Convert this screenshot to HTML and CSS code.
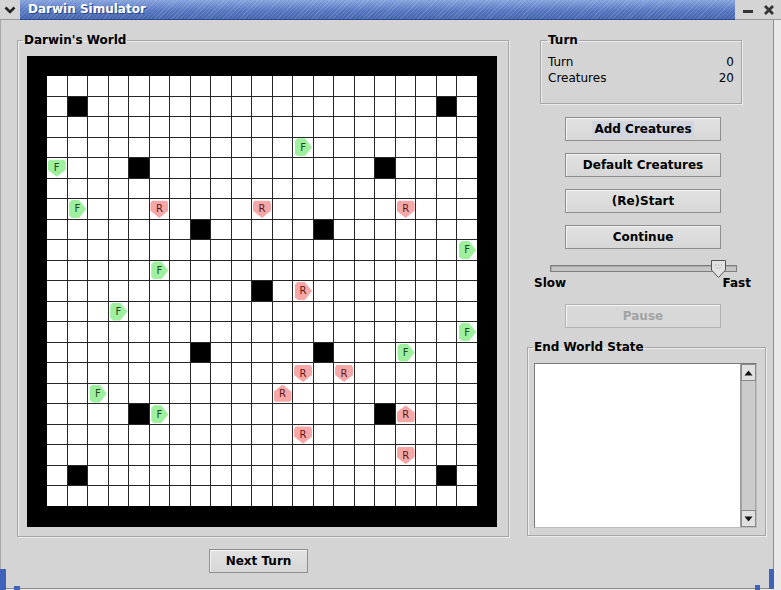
FILE: index.html
```html
<!DOCTYPE html>
<html>
<head>
<meta charset="utf-8">
<title>Darwin Simulator</title>
<link rel="stylesheet" href="styles.css">
</head>
<body>
<div class="window">
  <div class="titlebar">
    <div class="menu-btn">
      <svg width="12" height="10" viewBox="0 0 12 10"><path d="M1.5 2.5 L6 7 L10.5 2.5" fill="none" stroke="#222" stroke-width="2.6"/></svg>
    </div>
    <div class="title">Darwin Simulator</div>
    <div class="wm-btns">
      <svg width="12" height="12" viewBox="0 0 12 12"><rect x="1" y="6" width="10" height="3" fill="#333"/></svg>
      <svg width="12" height="12" viewBox="0 0 12 12"><path d="M2 2 L10 10 M10 2 L2 10" stroke="#333" stroke-width="2.8"/></svg>
    </div>
  </div>
  <div class="body">
    <div class="left">
      <fieldset class="group world-group">
        <legend>Darwin's World</legend>
        <div class="world"><div class="grid" id="grid"></div></div>
      </fieldset>
      <div class="next-row"><button class="btn next">Next Turn</button></div>
    </div>
    <div class="right">
      <fieldset class="group turn-group">
        <legend>Turn</legend>
        <div class="stat"><span>Turn</span><span>0</span></div>
        <div class="stat"><span>Creatures</span><span>20</span></div>
      </fieldset>
      <div class="buttons">
        <button class="btn"><span class="focus">Add Creatures</span></button>
        <button class="btn">Default Creatures</button>
        <button class="btn">(Re)Start</button>
        <button class="btn">Continue</button>
      </div>
      <div class="slider">
        <div class="track"></div>
        <svg class="thumb" width="15" height="18" viewBox="0 0 15 18"><path d="M0.5 0.5 H14.5 V10 L7.5 17.5 L0.5 10 Z" fill="#e2e2e2" stroke="#555"/><path d="M4 5 h1 M7 5 h1 M10 5 h1 M5.5 8 h1 M8.5 8 h1" stroke="#999"/></svg>
      </div>
      <div class="slider-labels"><span>Slow</span><span>Fast</span></div>
      <button class="btn disabled">Pause</button>
      <fieldset class="group end-group">
        <legend>End World State</legend>
        <div class="textarea">
          <div class="text"></div>
          <div class="scrollbar">
            <div class="arrow up"><svg width="9" height="6" viewBox="0 0 9 6"><path d="M0.5 5.5 L4.5 0.5 L8.5 5.5 Z" fill="#111"/></svg></div>
            <div class="sb-track"></div>
            <div class="arrow down"><svg width="9" height="6" viewBox="0 0 9 6"><path d="M0.5 0.5 L4.5 5.5 L8.5 0.5 Z" fill="#111"/></svg></div>
          </div>
        </div>
      </fieldset>
    </div>
  </div>
  <div class="handle hl"></div>
  <div class="handle hr"></div>
</div>
<script src="script.js"></script>
</body>
</html>
```
FILE: styles.css
```css
* { box-sizing: border-box; }
html, body { margin: 0; padding: 0; }
body {
  width: 781px; height: 590px; overflow: hidden;
  background: #e9e9e9;
  font-family: "DejaVu Sans", "Liberation Sans", sans-serif;
  font-size: 12px; color: #000;
}
.window { position: relative; width: 781px; height: 590px; }
.titlebar { height: 20px; display: flex; }
.menu-btn {
  width: 20px; background: #d4d4d4; border-bottom: 1px solid #9a9a9a;
  display: flex; align-items: center; justify-content: center;
}
.title {
  flex: 1; color: #fff; font-weight: bold; font-size: 12px; line-height: 19px;
  padding-left: 8px; border-bottom: 1px solid #2d4a8c;
  text-shadow: 1px 1px 0 #2c4684;
  background:
    repeating-linear-gradient(135deg, rgba(255,255,255,0.13) 0 1px, rgba(0,0,0,0) 1px 3px),
    linear-gradient(#86a3dc, #5676c0 55%, #4565b0);
}
.wm-btns {
  width: 46px; background: #d4d4d4; border-bottom: 1px solid #9a9a9a;
  display: flex; align-items: center; justify-content: space-around; padding: 0 2px;
}
.body {
  width: 774px; height: 569px; background: #d4d4d4;
  border-left: 1px solid #a8a8a8; border-right: 1px solid #8c8c8c; border-bottom: 1px solid #8c8c8c;
  display: flex; gap: 18px; padding: 13px 0 0 16px;
}
.group {
  margin: 0; border: 1px solid #a6a6a6;
  box-shadow: 1px 1px 0 #ececec, inset 1px 1px 0 #ececec;
  min-width: 0;
}
.group legend {
  padding: 0 1px; font-weight: bold; font-size: 12px; line-height: 14px;
}
.left { width: 492px; display: flex; flex-direction: column; }
.world-group { width: 492px; padding: 9px 11px 9px 9px; }
.world-group legend { margin-left: -4px; }
.world { width: 470px; height: 471px; background: #000; padding: 20px 20px 21px 20px; }
.grid {
  width: 430px; height: 430px; background: #262626;
  display: grid; grid-template-columns: repeat(21, 1fr); grid-template-rows: repeat(21, 1fr);
  gap: 1px;
}
.cell { background: #fff; display: flex; align-items: center; justify-content: center; }
.cell.wall { background: #000; }
.cr {
  width: 18px; height: 18px; display: flex; align-items: center; justify-content: center;
  font-size: 10px; line-height: 1; padding-top: 1px;
}
.cr.f { background: #9ef09e; color: #1d4a1d; }
.cr.r { background: #f6a8a8; color: #5c1616; }
.cr.s { clip-path: polygon(8% 5%, 92% 5%, 100% 20%, 100% 60%, 50% 100%, 0 60%, 0 20%); }
.cr.n { clip-path: polygon(50% 0, 100% 40%, 100% 85%, 90% 95%, 10% 95%, 0 85%, 0 40%); }
.cr.e { clip-path: polygon(20% 0, 60% 0, 100% 50%, 60% 100%, 20% 100%, 5% 85%, 5% 15%); }
.cr.w { clip-path: polygon(40% 0, 80% 0, 95% 15%, 95% 85%, 80% 100%, 40% 100%, 0 50%); }
.next-row { margin-top: 12px; padding-left: 192px; }
.btn {
  font-family: inherit; font-size: 12px; font-weight: bold; color: #000;
  background: linear-gradient(#e2e2e2, #d6d6d6);
  border: 1px solid #8e8e8e; box-shadow: inset 1px 1px 0 #f4f4f4;
  height: 24px; padding: 0; margin: 0; display: flex; align-items: center; justify-content: center;
}
.btn.next { width: 99px; }
.right { width: 239px; display: flex; flex-direction: column; }
.turn-group { width: 202px; margin-left: 13px; padding: 7px 7px 17px 7px; }
.turn-group legend { margin-left: -1px; }
.stat { display: flex; justify-content: space-between; line-height: 16px; }
.buttons { margin-top: 13px; display: flex; flex-direction: column; gap: 12px; }
.right .btn { width: 156px; margin-left: 38px; }
.focus { background: #d2d5df; padding: 1px 2px; }
.slider { position: relative; margin: 11px 0 0 23px; width: 187px; height: 17px; }
.track {
  position: absolute; left: 0; top: 5px; width: 187px; height: 7px;
  border: 1px solid #7e7e7e; background: #c6c6c6; box-shadow: inset 1px 1px 0 #a8a8a8;
}
.thumb { position: absolute; left: 161px; top: 0; }
.slider-labels {
  display: flex; justify-content: space-between; width: 217px; margin-left: 7px;
  font-weight: bold; line-height: 13px;
}
.btn.disabled { margin-top: 14px; color: #a3a3a3; border-color: #b2b2b2; background: #d8d8d8; }
.end-group { width: 239px; margin-top: 12px; padding: 9px 8px 7px 6px; }
.end-group legend { margin-left: -1px; }
.textarea {
  width: 223px; height: 165px; display: flex; background: #fff;
  border: 1px solid #7a7a7a; border-right-color: #bbb; border-bottom-color: #bbb;
}
.text { flex: 1; }
.scrollbar { width: 16px; display: flex; flex-direction: column; background: #c9c9c9; border-left: 1px solid #9a9a9a; }
.arrow {
  height: 17px; background: #e0e0e0; border: 1px solid #8a8a8a;
  display: flex; align-items: center; justify-content: center;
}
.sb-track { flex: 1; border: 1px solid #a6a6a6; border-top: 0; border-bottom: 0; background: #cbcbcb; }
.handle { position: absolute; background: #3f63b8; }
.hl { left: 0; top: 569px; width: 6px; height: 21px; box-shadow: 0 17px 0 0 #3f63b8, 14px 17px 0 0 #3f63b8; }
.hr { left: 769px; top: 569px; width: 5px; height: 20px; box-shadow: -14px 16px 0 0 #3f63b8; }
```
FILE: script.js
```js
var N = 21;
var walls = [[1,1],[19,1],[4,4],[16,4],[7,7],[13,7],[10,10],[7,13],[13,13],[4,16],[16,16],[1,19],[19,19]];
var creatures = [
  [12,3,'F','e'],[0,4,'F','s'],[1,6,'F','e'],[20,8,'F','e'],[5,9,'F','e'],
  [3,11,'F','e'],[20,12,'F','e'],[17,13,'F','e'],[2,15,'F','e'],[5,16,'F','e'],
  [5,6,'R','s'],[10,6,'R','s'],[17,6,'R','s'],[12,10,'R','e'],[12,14,'R','s'],
  [14,14,'R','s'],[11,15,'R','n'],[17,16,'R','n'],[12,17,'R','s'],[17,18,'R','s']
];
var grid = document.getElementById('grid');
var wallSet = {};
walls.forEach(function (w) { wallSet[w[0] + ',' + w[1]] = true; });
var crSet = {};
creatures.forEach(function (c) { crSet[c[0] + ',' + c[1]] = c; });
for (var r = 0; r < N; r++) {
  for (var c = 0; c < N; c++) {
    var cell = document.createElement('div');
    cell.className = 'cell';
    var key = c + ',' + r;
    if (wallSet[key]) cell.className += ' wall';
    if (crSet[key]) {
      var d = crSet[key];
      var s = document.createElement('span');
      s.className = 'cr ' + d[2].toLowerCase() + ' ' + d[3];
      s.textContent = d[2];
      cell.appendChild(s);
    }
    grid.appendChild(cell);
  }
}
```
